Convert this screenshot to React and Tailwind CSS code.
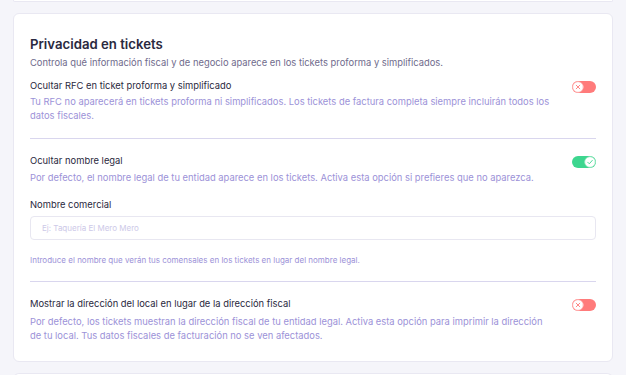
import React, { useState } from 'react';

const Toggle = ({ on, onClick }) => (
    <button
        type="button"
        onClick={onClick}
        className={`relative shrink-0 w-[24px] h-[12px] rounded-full mt-[3px] ${on ? 'bg-[#3dd68f]' : 'bg-[#ff7b7b]'}`}
    >
        <svg
            width="12"
            height="12"
            viewBox="0 0 12 12"
            fill="none"
            strokeLinecap="round"
            strokeLinejoin="round"
            className={`absolute top-0 ${on ? 'left-[12px]' : 'left-0'}`}
        >
            <circle cx="6" cy="6" r="5.3" fill="white" stroke={on ? '#9be8c2' : '#ffb3b3'} strokeWidth="0.8" />
            {on ? (
                <path d="M3.7 6.2l1.6 1.6 3-3.4" stroke="#3dd68f" strokeWidth="0.9" />
            ) : (
                <path d="M4.2 4.2l3.6 3.6M7.8 4.2l-3.6 3.6" stroke="#ff7b7b" strokeWidth="0.9" />
            )}
        </svg>
    </button>
);

const App = () => {
    const [hideRfc, setHideRfc] = useState(false);
    const [hideName, setHideName] = useState(true);
    const [localAddr, setLocalAddr] = useState(false);

    return (
        <div className="h-screen w-full bg-[#f5f5fa] px-[13px] flex flex-col gap-[11px] overflow-hidden" style={{ fontFamily: 'Inter, "Noto Sans", sans-serif' }}>
            {/* previous card (cut off) */}
            <div className="shrink-0 h-[2px] bg-white border-x border-b border-[#e9e8f2] rounded-b-[6px]" />

            <div className="shrink-0 bg-white border border-[#e9e8f2] rounded-[6px] px-[16px] pt-[21px] pb-[18px]">
                <h2 className="text-[13.2px] leading-[18px] font-semibold text-[#2a2940]">Privacidad en tickets</h2>
                <p className="mt-[3px] text-[9.4px] leading-[14px] text-[#6f6b8c]">
                    Controla qué información fiscal y de negocio aparece en los tickets proforma y simplificados.
                </p>

                {/* RFC */}
                <div className="mt-[8px] flex items-start justify-between gap-[16px]">
                    <div className="flex-1">
                        <p className="text-[9.4px] leading-[16px] text-[#2a2940]">Ocultar RFC en ticket proforma y simplificado</p>
                        <p className="mt-[1px] text-[9.4px] leading-[14px] text-[#9c92d8]">
                            Tu RFC no aparecerá en tickets proforma ni simplificados. Los tickets de factura completa siempre incluirán todos los datos fiscales.
                        </p>
                    </div>
                    <Toggle on={hideRfc} onClick={() => setHideRfc(!hideRfc)} />
                </div>

                <div className="mt-[15px] h-px bg-[#d9d6ee]" />

                {/* Nombre legal */}
                <div className="mt-[14px] flex items-start justify-between gap-[16px]">
                    <div className="flex-1">
                        <p className="text-[9.4px] leading-[16px] text-[#2a2940]">Ocultar nombre legal</p>
                        <p className="mt-[2px] text-[9.4px] leading-[14px] text-[#9c92d8]">
                            Por defecto, el nombre legal de tu entidad aparece en los tickets. Activa esta opción si prefieres que no aparezca.
                        </p>
                    </div>
                    <Toggle on={hideName} onClick={() => setHideName(!hideName)} />
                </div>

                <label className="block mt-[12px] text-[9.4px] leading-[16px] text-[#2a2940]">Nombre comercial</label>
                <input
                    type="text"
                    placeholder="Ej: Taquería El Mero Mero"
                    className="mt-[3px] w-full h-[24px] px-[11px] rounded-[4px] border border-[#e8e7f1] text-[8px] text-[#2a2940] placeholder:text-[#cdc9e8] outline-none"
                />
                <p className="mt-[14px] text-[8px] leading-[12px] text-[#9c92d8]">
                    Introduce el nombre que verán tus comensales en los tickets en lugar del nombre legal.
                </p>

                <div className="mt-[15px] h-px bg-[#d9d6ee]" />

                {/* Dirección */}
                <div className="mt-[14px] flex items-start justify-between gap-[16px]">
                    <div className="flex-1">
                        <p className="text-[9.4px] leading-[16px] text-[#2a2940]">Mostrar la dirección del local en lugar de la dirección fiscal</p>
                        <p className="mt-[3px] text-[9.4px] leading-[14px] text-[#9c92d8]">
                            Por defecto, los tickets muestran la dirección fiscal de tu entidad legal. Activa esta opción para imprimir la dirección de tu local. Tus datos fiscales de facturación no se ven afectados.
                        </p>
                    </div>
                    <Toggle on={localAddr} onClick={() => setLocalAddr(!localAddr)} />
                </div>
            </div>

            {/* next card (cut off) */}
            <div className="shrink-0 h-[20px] bg-white border-x border-t border-[#e9e8f2] rounded-t-[6px]" />
        </div>
    );
};

export default App;
